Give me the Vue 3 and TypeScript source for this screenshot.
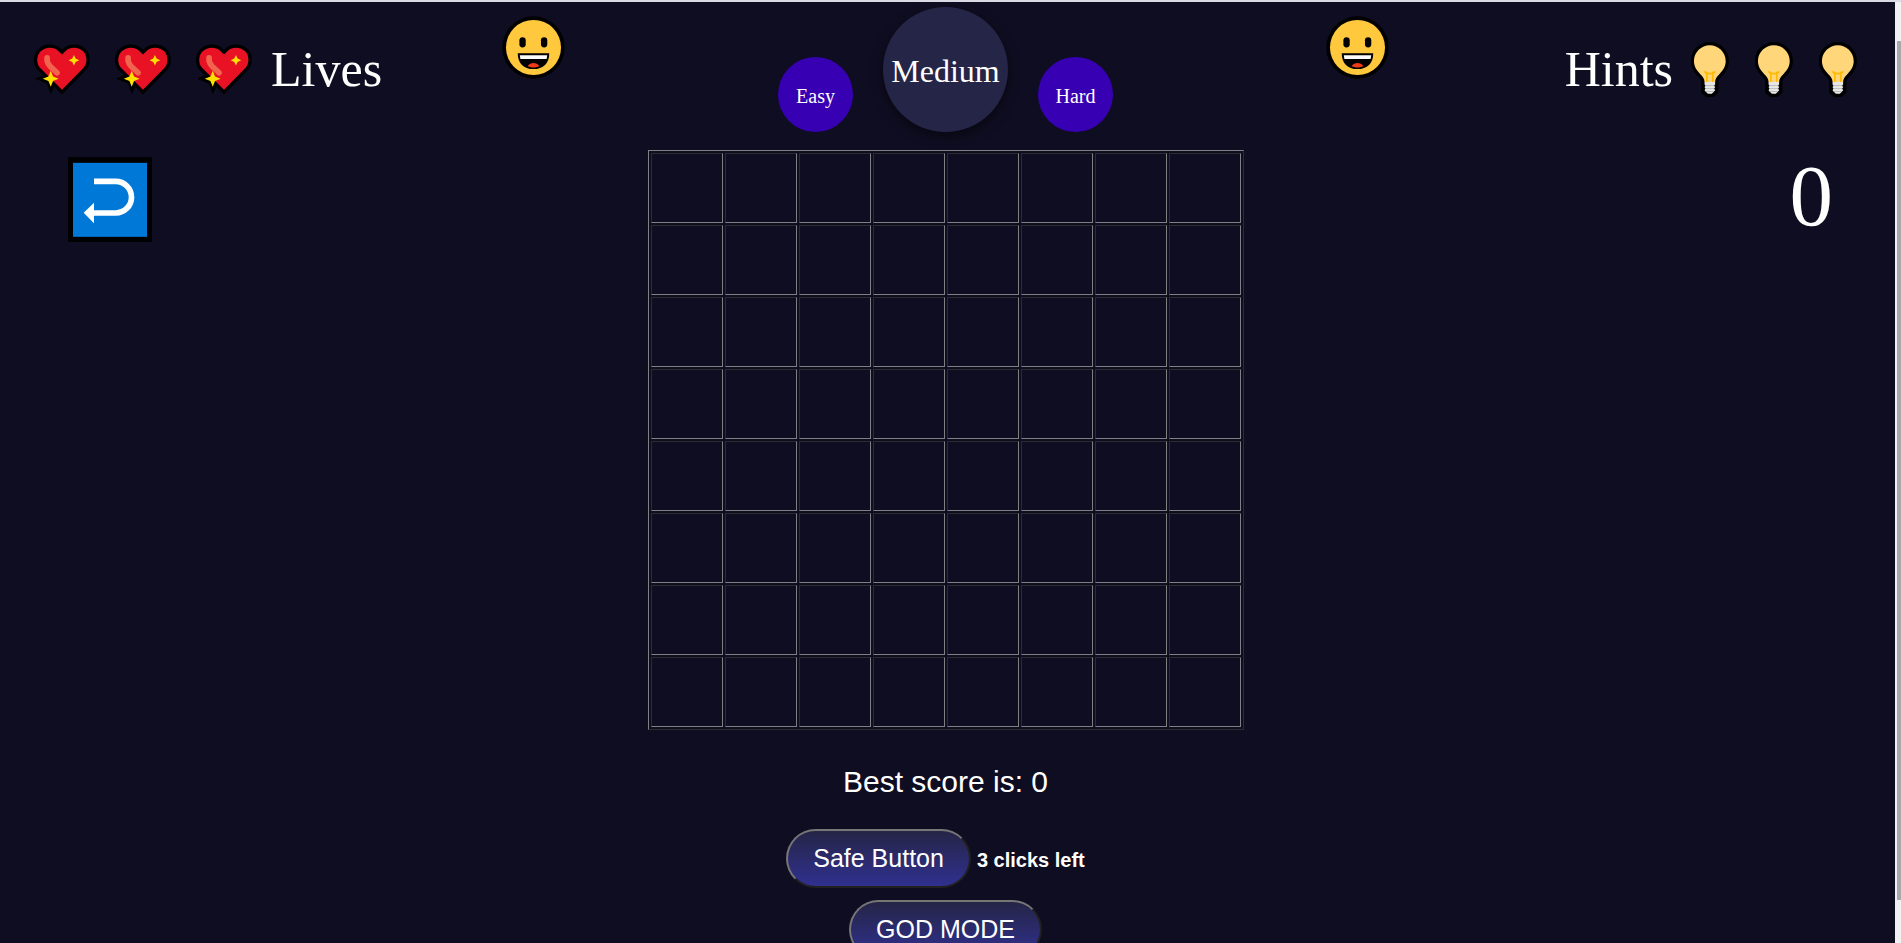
<script setup lang="ts">
import { ref } from 'vue'

type Level = 'Easy' | 'Medium' | 'Hard'

const levels: Level[] = ['Easy', 'Medium', 'Hard']
const level = ref<Level>('Medium')
const lives = ref(3)
const hints = ref(3)
const seconds = ref(0)
const bestScore = ref(0)
const safeClicks = ref(3)
const boardSize = 8
</script>

<template>
  <div class="window">
    <div class="top-edge"></div>
    <div class="viewport">
      <main class="page">
        <header class="header">
          <div class="status">
            <svg v-for="n in lives" :key="n" class="heart" viewBox="101 130 168 154" aria-hidden="true">
              <path
                d="M185 268L118 201C107 188 108 165 120 153C135 138 160 138 174 151L185 162L196 151C210 138 235 138 250 153C261 165 262 188 251 201Z"
                fill="#000" stroke="#000" stroke-width="20" />
              <path d="M104 235L130 223L150 220L168 256L161 261L151 281L139 249Z" fill="#000" />
              <path
                d="M185 268L118 201C107 188 108 165 120 153C135 138 160 138 174 151L185 162L196 151C210 138 235 138 250 153C261 165 262 188 251 201Z"
                fill="#e81224" />
              <path d="M140 172V181Q142 190 149 197L170 217" fill="none" stroke="#f1654f" stroke-width="17"
                stroke-linecap="round" />
              <path d="M151 211L158 228L175 235L158 242L151 259L144 242L127 235L144 228Z" fill="#fce100" />
              <path d="M221 163L226 174L237 179L226 184L221 195L216 184L205 179L216 174Z" fill="#fce100" />
            </svg>
            <span class="status-text">Lives</span>
          </div>

          <div class="center">
            <button type="button" class="face-button" aria-label="Restart">
              <svg class="face" viewBox="66 50 189 190" aria-hidden="true">
                <circle cx="160.500" cy="145" r="94" />
                <circle cx="160.500" cy="145" r="83" fill="#ffc83d" />
                <rect x="118" y="114" width="19" height="31" rx="9.500" />
                <rect x="183" y="114" width="19" height="31" rx="9.500" />
                <path d="M113 162H208C208 192 190 210 160 210C131 210 113 192 113 162Z" />
                <path d="M119 168H202L200 180H121Z" fill="#fff" />
                <path d="M143 201C150 189 171 189 178 201C168 207 153 207 143 201Z" fill="#f03a17" />
              </svg>
            </button>
            <nav class="levels" aria-label="Difficulty">
              <button v-for="name in levels" :key="name" type="button" class="level"
                :class="{ active: name === level }" @click="level = name">{{ name }}</button>
            </nav>
            <button type="button" class="face-button" aria-label="New game">
              <svg class="face" viewBox="66 50 189 190" aria-hidden="true">
                <circle cx="160.500" cy="145" r="94" />
                <circle cx="160.500" cy="145" r="83" fill="#ffc83d" />
                <rect x="118" y="114" width="19" height="31" rx="9.500" />
                <rect x="183" y="114" width="19" height="31" rx="9.500" />
                <path d="M113 162H208C208 192 190 210 160 210C131 210 113 192 113 162Z" />
                <path d="M119 168H202L200 180H121Z" fill="#fff" />
                <path d="M143 201C150 189 171 189 178 201C168 207 153 207 143 201Z" fill="#f03a17" />
              </svg>
            </button>
          </div>

          <div class="status status-right">
            <span class="status-text">Hints</span>
            <button v-for="n in hints" :key="n" type="button" class="hint" :aria-label="`Hint ${n}`">
              <svg class="bulb" viewBox="456 120 115 171" aria-hidden="true">
                <path
                  d="M513 132C539 132 561 153 561 180C561 197 553 208 543 218C533 227 529 234 529 243V272L520 279H506L497 272V243C497 234 493 227 483 218C473 208 465 197 465 180C465 153 487 132 513 132Z"
                  stroke="#000" stroke-width="20" stroke-linejoin="round" />
                <path
                  d="M513 132C539 132 561 153 561 180C561 197 553 208 543 218C533 227 529 234 529 243H497C497 234 493 227 483 218C473 208 465 197 465 180C465 153 487 132 513 132Z"
                  fill="#ffd679" />
                <path d="M498 213L504 218H522L528 213M504 214V243M522 214V243" fill="none" stroke="#ffb900"
                  stroke-width="5" stroke-linecap="round" />
                <path d="M497 243H529V251L526 254L529 259L526 263L529 268L526 272L519 279H507L500 272L497 268L500 263L497 259L500 254L497 251Z"
                  fill="#e6e6e6" />
                <path d="M500 254H526M500 263H526M501 272H525" fill="none" stroke="#aaa" stroke-width="2" />
              </svg>
            </button>
          </div>
        </header>

        <section class="game">
          <div class="side-left">
            <button type="button" class="undo" aria-label="Undo">
              <svg class="undo-icon" viewBox="204 471 252 254" aria-hidden="true">
                <rect x="204" y="471" width="252" height="254" />
                <rect x="219" y="488" width="222" height="222" fill="#0078d7" />
                <path d="M282 543.500H347A47 47 0 0 1 347 638.500H280" fill="none" stroke="#fff" stroke-width="17" />
                <path d="M251 638L282 608V669Z" fill="#fff" />
              </svg>
            </button>
          </div>
          <table class="board">
            <tbody>
              <tr v-for="row in boardSize" :key="row">
                <td v-for="col in boardSize" :key="col"></td>
              </tr>
            </tbody>
          </table>
          <div class="timer">{{ seconds }}</div>
        </section>

        <section class="footer">
          <p class="best">Best score is: {{ bestScore }}</p>
          <div class="safe-row">
            <button type="button" class="action">Safe Button</button>
            <strong class="clicks">{{ safeClicks }} clicks left</strong>
          </div>
          <button type="button" class="action">GOD MODE</button>
        </section>
      </main>
      <div class="scroll-track" aria-hidden="true">
        <div class="scroll-thumb"></div>
      </div>
    </div>
  </div>
</template>

<style>
html,
body {
  margin: 0;
  background: #0f0d21;
}
</style>

<style scoped>
.window {
  display: flex;
  flex-direction: column;
  height: 100vh;
  overflow: hidden;
  background: #0f0d21;
  color: #fff;
  font-family: "Liberation Serif", "Times New Roman", serif;
}

.top-edge {
  flex: none;
  height: 2px;
  background: #d9dae3;
}

.viewport {
  display: flex;
  flex: 1;
  min-height: 0;
}

.page {
  flex: 1;
  min-width: 0;
  padding-right: 4px;
  overflow: hidden;
}

.scroll-track {
  display: flex;
  flex: none;
  width: 4px;
  padding: 39px 0 43px 2px;
  background: #f1f1f1;
}

.scroll-thumb {
  flex: 1;
  background: #a8a8a8;
}

button {
  margin: 0;
  padding: 0;
  border: 0;
  background: none;
  color: inherit;
  font: inherit;
  cursor: pointer;
}

svg {
  display: block;
}

.header {
  display: grid;
  grid-template-columns: 1fr auto 1fr;
  margin-bottom: 18px;
  padding: 5px 34px 0;
}

.status {
  display: flex;
  align-items: center;
  align-self: start;
  gap: 25px;
  padding-top: 33px;
}

.status-right {
  justify-content: flex-end;
  gap: 26px;
}

.status-text {
  font-size: 50px;
  line-height: 58px;
}

.status .heart + .status-text {
  margin-left: -6px;
}

.status-right .status-text {
  margin-right: -8px;
}

.heart {
  width: 56px;
  height: 51px;
}

.bulb {
  width: 38px;
  height: 57px;
}

.center {
  display: flex;
  align-items: flex-start;
  gap: 213px;
}

.face-button {
  padding-top: 9px;
}

.face {
  width: 63px;
  height: 63px;
}

.levels {
  display: flex;
  align-items: flex-end;
  gap: 30px;
}

.level {
  width: 75px;
  height: 75px;
  padding-top: 3px;
  border-radius: 50%;
  background: #3700b3;
  font-size: 20px;
}

.level.active {
  width: 125px;
  height: 125px;
  background: #252547;
  box-shadow: 0 4px 12px rgba(0, 0, 0, 0.5);
  font-size: 32px;
}

.game {
  display: grid;
  grid-template-columns: 1fr auto 1fr;
  align-items: start;
}

.side-left {
  padding: 7px 0 0 68px;
}

.undo-icon {
  width: 84px;
  height: 85px;
}

.timer {
  padding-right: 58px;
  font-size: 87px;
  line-height: 92px;
  text-align: right;
}

.board {
  border: 1px solid;
  border-color: #808080 #2c2c2c #2c2c2c #808080;
  border-spacing: 2px;
}

.board td {
  box-sizing: border-box;
  width: 72px;
  height: 70px;
  padding: 0;
  border: 1px solid;
  border-color: #2c2c2c #808080 #808080 #2c2c2c;
}

.footer {
  display: flex;
  flex-direction: column;
  align-items: center;
  gap: 12px;
  font-family: "Liberation Sans", Arial, sans-serif;
}

.best {
  margin: 35px 0 18px;
  font-size: 30px;
  line-height: 34px;
}

.safe-row {
  display: flex;
  align-items: center;
  gap: 6px;
  padding-right: 20px;
}

.clicks {
  padding-top: 4px;
  font-size: 20px;
}

.action {
  padding: 13px 25px;
  border: 2px solid;
  border-color: #767676 #212121 #212121 #767676;
  border-radius: 30px;
  background: linear-gradient(#252547, #303090);
  font-size: 25px;
  line-height: 29px;
}
</style>
